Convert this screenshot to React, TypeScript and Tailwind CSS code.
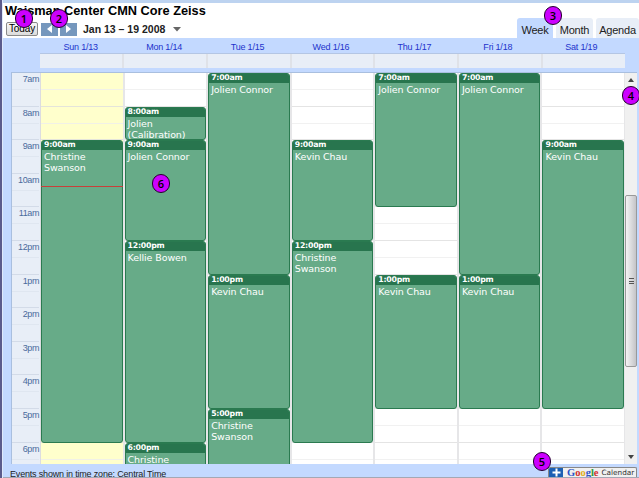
interface CalendarEvent {
  start: number;
  end: number;
  time: string;
  lines: string[];
}

interface Day {
  label: string;
  today?: boolean;
  events: CalendarEvent[];
}

const HOUR_HEIGHT = 33.6;
const FIRST_HOUR = 7;

const hours = ["7am", "8am", "9am", "10am", "11am", "12pm", "1pm", "2pm", "3pm", "4pm", "5pm", "6pm"];

const days: Day[] = [
  {
    label: "Sun 1/13",
    today: true,
    events: [{ start: 9, end: 18, time: "9:00am", lines: ["Christine", "Swanson"] }],
  },
  {
    label: "Mon 1/14",
    events: [
      { start: 8, end: 9, time: "8:00am", lines: ["Jolien", "(Calibration)"] },
      { start: 9, end: 12, time: "9:00am", lines: ["Jolien Connor"] },
      { start: 12, end: 18, time: "12:00pm", lines: ["Kellie Bowen"] },
      { start: 18, end: 20, time: "6:00pm", lines: ["Christine"] },
    ],
  },
  {
    label: "Tue 1/15",
    events: [
      { start: 7, end: 13, time: "7:00am", lines: ["Jolien Connor"] },
      { start: 13, end: 17, time: "1:00pm", lines: ["Kevin Chau"] },
      { start: 17, end: 20, time: "5:00pm", lines: ["Christine", "Swanson"] },
    ],
  },
  {
    label: "Wed 1/16",
    events: [
      { start: 9, end: 12, time: "9:00am", lines: ["Kevin Chau"] },
      { start: 12, end: 18, time: "12:00pm", lines: ["Christine", "Swanson"] },
    ],
  },
  {
    label: "Thu 1/17",
    events: [
      { start: 7, end: 11, time: "7:00am", lines: ["Jolien Connor"] },
      { start: 13, end: 17, time: "1:00pm", lines: ["Kevin Chau"] },
    ],
  },
  {
    label: "Fri 1/18",
    events: [
      { start: 7, end: 13, time: "7:00am", lines: ["Jolien Connor"] },
      { start: 13, end: 17, time: "1:00pm", lines: ["Kevin Chau"] },
    ],
  },
  {
    label: "Sat 1/19",
    events: [{ start: 9, end: 17, time: "9:00am", lines: ["Kevin Chau"] }],
  },
];

function Marker({ n, className }: { n: number; className: string }) {
  return (
    <div
      className={`absolute z-20 flex h-[19px] w-[18px] items-center justify-center rounded-full border border-[#24002e] bg-[#cc00ff] font-['Open_Sans',sans-serif] text-[11px] leading-none font-semibold text-black ${className}`}
    >
      {n}
    </div>
  );
}

function EventBlock({ event, offset }: { event: CalendarEvent; offset: number }) {
  return (
    <div
      className="shrink-0 overflow-hidden rounded-[3px] border border-[#2a7a50] bg-[#67ab88] font-['DejaVu_Sans',sans-serif] text-white"
      style={{ marginTop: offset * HOUR_HEIGHT, height: (event.end - event.start) * HOUR_HEIGHT }}
    >
      <div className="h-[9px] bg-[#28754e] pl-[2px] text-[7.8px] leading-[8px] font-bold tracking-[-0.25px]">
        {event.time}
      </div>
      <div className="pt-[1px] pl-[2px] text-[9.5px] leading-[11.3px] tracking-[-0.1px] whitespace-nowrap">
        {event.lines.map((line) => (
          <div key={line}>{line}</div>
        ))}
      </div>
    </div>
  );
}

function DayColumn({ day }: { day: Day }) {
  return (
    <div
      className={`relative flex min-w-0 flex-1 flex-col border-r-2 border-[#e6e6e8] ${day.today ? "bg-[#ffffcc]" : "bg-white"}`}
    >
      <div className="absolute inset-0">
        {hours.map((hour) => (
          <div key={hour} className="h-[33.6px] border-b border-[#dddddd]/80">
            <div className="h-[17px] border-b border-[#eeeeee]/80" />
          </div>
        ))}
      </div>
      <div className="relative flex flex-col">
        {day.events.map((event, i) => (
          <EventBlock
            key={event.start}
            event={event}
            offset={event.start - (i > 0 ? day.events[i - 1].end : FIRST_HOUR)}
          />
        ))}
      </div>
      {day.today && <div className="absolute top-[113px] right-0 left-0 z-10 h-px bg-[#c8403a]" />}
    </div>
  );
}

function Toolbar() {
  return (
    <div className="flex h-[35px] justify-between bg-white">
      <div className="pl-[2px]">
        <h1 className="h-[19px] text-[12.75px] leading-[15px] font-bold whitespace-nowrap text-black">
          Waisman Center CMN Core Zeiss
        </h1>
        <div className="flex h-[14px] items-center">
          <button className="ml-[1px] h-[14px] w-[32px] rounded-[2px] border border-[#8a8a8a] bg-linear-to-b from-[#f6f6f6] to-[#dcdcdc] text-[10px] leading-[12px] tracking-[-0.1px] text-black">
            Today
          </button>
          <button className="ml-[3px] flex h-[13px] w-[17px] items-center justify-center bg-[#7597bd]">
            <svg width="5" height="8" viewBox="0 0 5 8">
              <path d="M5 0v8L0 4z" fill="#fff" />
            </svg>
          </button>
          <button className="ml-[2px] flex h-[13px] w-[17px] items-center justify-center bg-[#7597bd]">
            <svg width="5" height="8" viewBox="0 0 5 8">
              <path d="M0 0v8l5-4z" fill="#fff" />
            </svg>
          </button>
          <span className="ml-[6px] text-[10.5px] leading-[14px] font-bold whitespace-nowrap text-[#222]">
            Jan 13 – 19 2008
          </span>
          <svg className="ml-[8px]" width="8" height="5" viewBox="0 0 8 5">
            <path d="M0 0h8L4 4.5z" fill="#666" />
          </svg>
        </div>
      </div>
      <div className="flex items-end gap-[3px] text-[11px] leading-[24px] tracking-[-0.2px] text-[#222]">
        <div className="h-[20px] w-[36px] rounded-t-[3px] bg-[#c3d9ff] text-center">Week</div>
        <div className="h-[20px] w-[37px] rounded-t-[3px] bg-[#e8eef7] text-center">Month</div>
        <div className="h-[20px] w-[43px] rounded-t-[3px] bg-[#e8eef7] text-center">Agenda</div>
      </div>
    </div>
  );
}

function Scrollbar() {
  return (
    <div className="relative flex w-[12px] flex-col items-center bg-[#f0f0f0]">
      <svg className="mt-[5px]" width="6" height="4" viewBox="0 0 6 4">
        <path d="M0 4h6L3 0z" fill="#444" />
      </svg>
      <div className="mt-[113px] flex h-[172px] w-[12px] items-center justify-center rounded-[2px] border border-[#999] bg-linear-to-r from-[#f4f4f4] to-[#c4c4c8]">
        <div className="flex h-[6px] w-[5px] flex-col justify-between">
          <div className="h-px bg-[#555]" />
          <div className="h-px bg-[#555]" />
          <div className="h-px bg-[#555]" />
        </div>
      </div>
      <svg className="mt-auto mb-[5px]" width="6" height="4" viewBox="0 0 6 4">
        <path d="M0 0h6L3 4z" fill="#444" />
      </svg>
    </div>
  );
}

function GoogleBadge() {
  return (
    <div className="flex h-[10px] w-[89px] items-stretch overflow-hidden rounded-t-[2px] border border-b-0 border-[#888] bg-[#f0f0f0]">
      <div className="flex w-[14px] items-center justify-center bg-[#1d5fb4]">
        <svg width="9" height="9" viewBox="0 0 9 9">
          <path d="M4.5 0.5v8M0.5 4.5h8" stroke="#fff" strokeWidth="2" />
        </svg>
      </div>
      <div className="ml-[4px] font-['Liberation_Serif',serif] text-[10.5px] leading-[9px] font-bold">
        <span className="text-[#2a52c8]">G</span>
        <span className="text-[#d22f2f]">o</span>
        <span className="text-[#e0b020]">o</span>
        <span className="text-[#2a52c8]">g</span>
        <span className="text-[#2c9a3c]">l</span>
        <span className="text-[#d22f2f]">e</span>
      </div>
      <span className="ml-[3px] font-['DejaVu_Sans',sans-serif] text-[7.3px] leading-[9px] text-[#333]">
        Calendar
      </span>
    </div>
  );
}

export default function App() {
  return (
    <div className="relative flex h-[478px] w-[639px] overflow-hidden bg-[#c3d9ff] font-['Liberation_Sans',Arial,sans-serif]">
      <div className="w-[2px] shrink-0 bg-[#5b5b8c]" />
      <div className="flex min-w-0 flex-1 flex-col border-l border-[#dfe9fb]">
        <div className="h-[3px] shrink-0 bg-[#bdd3f0]" />
        <Toolbar />

        <div className="mr-[16px] ml-[36px] flex h-[15px] shrink-0 text-[9px] leading-[18px] tracking-[-0.2px] text-[#2233cc]">
          {days.map((day) => (
            <div key={day.label} className="flex-1 text-center">
              {day.label}
            </div>
          ))}
        </div>
        <div className="mr-[14px] ml-[37px] flex h-[15px] shrink-0 border-t border-[#b4c6e4] bg-[#e8eef7]">
          {days.map((day) => (
            <div key={day.label} className="flex-1 border-r-2 border-[#dfe2e8] last:border-r-0" />
          ))}
        </div>

        <div className="mt-[4px] mr-[2px] ml-[8px] flex h-[392px] shrink-0 overflow-hidden border-t border-l border-[#a9bfdf]">
          <div className="w-[29px] shrink-0 border-r border-[#dcdce0] bg-[#e8eef7] pr-[1px] text-right text-[9px] leading-[13px] tracking-[-0.4px] text-[#4a6a9c]">
            {hours.map((hour) => (
              <div key={hour} className="h-[33.6px] border-b border-[#d3dbe8]">
                <div className="h-[17px] border-b border-[#dfe6f0]">{hour}</div>
              </div>
            ))}
          </div>
          <div className="-mr-px flex min-w-0 flex-1">
            {days.map((day) => (
              <DayColumn key={day.label} day={day} />
            ))}
          </div>
          <Scrollbar />
        </div>

        <div className="flex h-[13px] shrink-0 items-end justify-between overflow-hidden pr-[2px] pl-[7px]">
          <span className="h-[9px] text-[9px] leading-[13px] tracking-[-0.18px] whitespace-nowrap text-[#222]">
            Events shown in time zone: Central Time
          </span>
          <GoogleBadge />
        </div>
        <div className="h-[1px] shrink-0 bg-[#a4a8b4]" />
      </div>

      <Marker n={1} className="top-[9px] left-[15px]" />
      <Marker n={2} className="top-[9px] left-[50px]" />
      <Marker n={3} className="top-[6px] left-[544px]" />
      <Marker n={4} className="top-[86px] left-[622px]" />
      <Marker n={5} className="top-[452px] left-[533px]" />
      <Marker n={6} className="top-[174px] left-[152px]" />
    </div>
  );
}
